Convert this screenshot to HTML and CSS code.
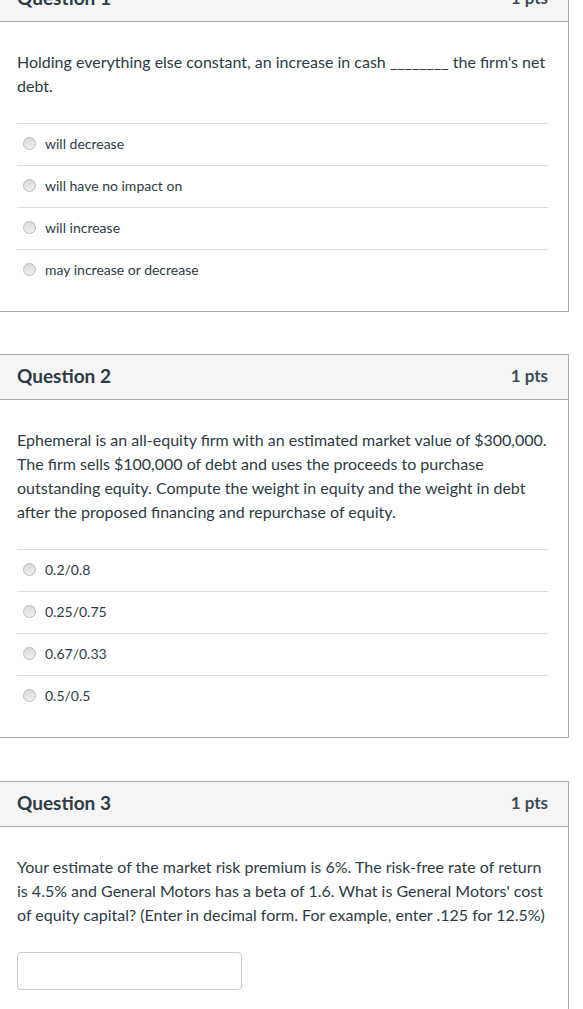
FILE: index.html
```html
<!DOCTYPE html>
<html lang="en">
<head>
<meta charset="utf-8">
<title>Quiz</title>
<link rel="stylesheet" href="styles.css">
</head>
<body>
<div class="quiz">
  <section class="question first">
    <header class="q-header">
      <h2 class="q-title">Question 1</h2>
      <span class="q-points">1 pts</span>
    </header>
    <div class="q-body">
      <p class="q-text">Holding everything else constant, an increase in cash ________ the firm's net debt.</p>
      <ul class="answers">
        <li class="answer"><span class="radio"></span><span class="answer-text">will decrease</span></li>
        <li class="answer"><span class="radio"></span><span class="answer-text">will have no impact on</span></li>
        <li class="answer"><span class="radio"></span><span class="answer-text">will increase</span></li>
        <li class="answer"><span class="radio"></span><span class="answer-text">may increase or decrease</span></li>
      </ul>
    </div>
  </section>

  <section class="question">
    <header class="q-header">
      <h2 class="q-title">Question 2</h2>
      <span class="q-points">1 pts</span>
    </header>
    <div class="q-body">
      <p class="q-text">Ephemeral is an all-equity firm with an estimated market value of $300,000. The firm sells $100,000 of debt and uses the proceeds to purchase outstanding equity. Compute the weight in equity and the weight in debt after the proposed financing and repurchase of equity.</p>
      <ul class="answers">
        <li class="answer"><span class="radio"></span><span class="answer-text">0.2/0.8</span></li>
        <li class="answer"><span class="radio"></span><span class="answer-text">0.25/0.75</span></li>
        <li class="answer"><span class="radio"></span><span class="answer-text">0.67/0.33</span></li>
        <li class="answer"><span class="radio"></span><span class="answer-text">0.5/0.5</span></li>
      </ul>
    </div>
  </section>

  <section class="question">
    <header class="q-header">
      <h2 class="q-title">Question 3</h2>
      <span class="q-points">1 pts</span>
    </header>
    <div class="q-body">
      <p class="q-text">Your estimate of the market risk premium is 6%. The risk-free rate of return is 4.5% and General Motors has a beta of 1.6. What is General Motors' cost of equity capital? (Enter in decimal form. For example, enter .125 for 12.5%)</p>
      <input class="answer-input" type="text" aria-label="Answer">
    </div>
  </section>
</div>
</body>
</html>
```

FILE: styles.css
```css
* {
  box-sizing: border-box;
}

html, body {
  margin: 0;
  padding: 0;
  background: #ffffff;
}

body {
  font-family: Lato, "Open Sans", "Liberation Sans", sans-serif;
  color: #2d3b45;
  overflow: hidden;
}

.quiz {
  width: 569px;
}

.question {
  border: 1px solid #aaaaaa;
  border-left: none;
  margin-bottom: 43px;
  background: #ffffff;
}

.question.first {
  margin-top: -24px;
  margin-bottom: 42px;
}

.q-header {
  height: 45px;
  background: #f5f5f5;
  border-bottom: 1px solid #aaaaaa;
  display: flex;
  align-items: center;
  justify-content: space-between;
  padding: 0 20px 3px 17px;
}

.q-title {
  margin: 0;
  font-size: 19px;
  font-weight: 700;
  color: #2d3b45;
}

.q-points {
  font-size: 17px;
  font-weight: 700;
  color: #3d4b55;
}

.q-body {
  padding: 28px 20px 20px 17px;
}

.q-text {
  margin: 0 0 25px;
  font-size: 16px;
  line-height: 24px;
}

.answers {
  list-style: none;
  margin: 0;
  padding: 0;
  border-top: 1px solid #dddddd;
}

.answer {
  height: 42px;
  border-bottom: 1px solid #dddddd;
  display: flex;
  align-items: center;
  padding: 0 0 3px 6px;
}

.answer:last-child {
  border-bottom: none;
  height: 41px;
}

.radio {
  width: 13px;
  height: 13px;
  border-radius: 50%;
  border: 1px solid #bbbbbb;
  background: linear-gradient(#dadada, #f0f0f0);
  margin-right: 9px;
  flex-shrink: 0;
}

.answer-text {
  font-size: 14px;
  color: #2d3b45;
}

.answer-input {
  display: block;
  width: 225px;
  height: 38px;
  border: 1px solid #cccccc;
  border-radius: 4px;
  background: #ffffff;
  font-family: inherit;
  font-size: 14px;
  padding: 0 8px;
}
```
